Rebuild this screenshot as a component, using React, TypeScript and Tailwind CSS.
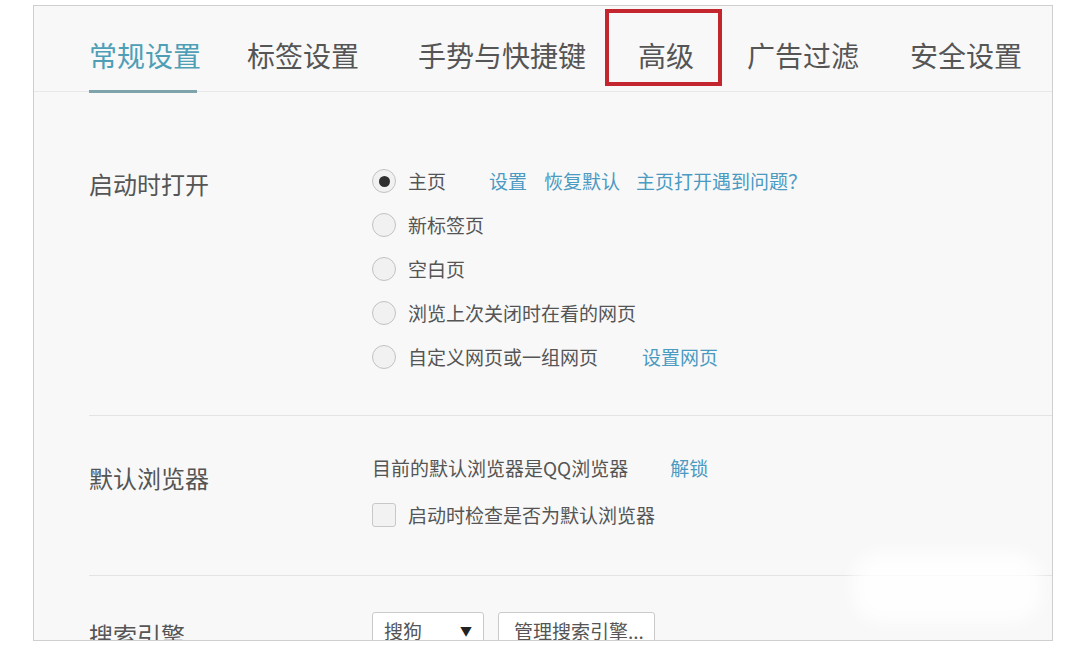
const tabs = [
  { label: "常规设置", ml: "ml-0", active: true },
  { label: "标签设置", ml: "ml-[46px]" },
  { label: "手势与快捷键", ml: "ml-[59px]" },
  { label: "高级", ml: "ml-[52px]", boxed: true },
  { label: "广告过滤", ml: "ml-[53px]" },
  { label: "安全设置", ml: "ml-[51px]" },
];

const Radio = ({ checked }: { checked?: boolean }) => (
  <span className="flex h-[24px] w-[24px] shrink-0 items-center justify-center rounded-full border-[1.5px] border-[#c2c2c2] bg-[#f1f1f1]">
    {checked && <span className="h-[11px] w-[11px] rounded-full bg-[#2e2e2e]" />}
  </span>
);

const Link = ({ children, className = "" }: { children: React.ReactNode; className?: string }) => (
  <span className={`text-[#4b9ac2] ${className}`}>{children}</span>
);

const App = () => {
  return (
    <div
      className="h-[647px] w-[1078px] bg-white pl-[33px] pt-[5px]"
      style={{ fontFamily: '"Noto Sans CJK SC", "Noto Sans", sans-serif' }}
    >
      <div className="relative h-[636px] w-[1020px] overflow-hidden border border-[#cfcfcf] bg-[#f8f8f8]">
        {/* tabs */}
        <div className="flex h-[86px] border-b border-[#e8e8e8] pl-[55px]">
          {tabs.map((t) => (
            <div
              key={t.label}
              className={`relative flex h-full items-center whitespace-nowrap pt-[12px] text-[28px] leading-none ${t.ml} ${
                t.active ? "text-[#4e9fb6]" : "text-[#555]"
              }`}
            >
              {t.label}
              {t.active && (
                <span className="absolute bottom-[-2px] left-0 h-[3px] w-[108px] bg-[#7fa3ab]" />
              )}
              {t.boxed && (
                <span className="absolute left-[-33px] right-[-28px] top-[3px] bottom-[5px] border-[4px] border-[#c3262e]" />
              )}
            </div>
          ))}
        </div>

        {/* 启动时打开 */}
        <div className="ml-[55px] flex border-b border-[#e3e3e3] pt-[67px] pb-[36px]">
          <div className="mt-[3px] flex h-[44px] w-[283px] items-center text-[24px] text-[#555]">启动时打开</div>
          <div className="flex flex-col whitespace-nowrap text-[19px] text-[#555]">
            <div className="flex h-[44px] items-center gap-[12px]">
              <Radio checked />
              <span>主页</span>
              <Link className="ml-[31px]">设置</Link>
              <Link className="ml-[5px]">恢复默认</Link>
              <Link className="ml-[4px]">主页打开遇到问题？</Link>
            </div>
            <div className="flex h-[44px] items-center gap-[12px]">
              <Radio />
              <span>新标签页</span>
            </div>
            <div className="flex h-[44px] items-center gap-[12px]">
              <Radio />
              <span>空白页</span>
            </div>
            <div className="flex h-[44px] items-center gap-[12px]">
              <Radio />
              <span>浏览上次关闭时在看的网页</span>
            </div>
            <div className="flex h-[44px] items-center gap-[12px]">
              <Radio />
              <span>自定义网页或一组网页</span>
              <Link className="ml-[32px]">设置网页</Link>
            </div>
          </div>
        </div>

        {/* 默认浏览器 */}
        <div className="ml-[55px] flex border-b border-[#e3e3e3] pt-[30px] pb-[38px]">
          <div className="w-[283px] pt-[17px] text-[24px] leading-[30px] text-[#555]">默认浏览器</div>
          <div className="flex flex-col gap-[3px] whitespace-nowrap text-[19px] text-[#555]">
            <div className="flex h-[44px] items-center">
              <span>目前的默认浏览器是QQ浏览器</span>
              <Link className="ml-[42px]">解锁</Link>
            </div>
            <div className="flex h-[44px] items-center gap-[12px]">
              <span className="h-[24px] w-[24px] rounded-[3px] border-[1.5px] border-[#c8c8c8] bg-[#f2f2f2]" />
              <span>启动时检查是否为默认浏览器</span>
            </div>
          </div>
        </div>

        {/* 搜索引擎 */}
        <div className="ml-[55px] flex pt-[36px]">
          <div className="w-[283px] pt-[8px] text-[24px] leading-[30px] text-[#555]">搜索引擎</div>
          <div className="flex gap-[14px] whitespace-nowrap text-[19px] text-[#555]">
            <div className="flex h-[38px] w-[112px] items-center justify-between rounded-[3px] border border-[#cacaca] bg-white px-[11px]">
              <span>搜狗</span>
              <span className="text-[12px] text-[#222]">▼</span>
            </div>
            <div className="flex h-[38px] w-[157px] items-center rounded-[3px] border border-[#cacaca] bg-white px-[15px]">
              管理搜索引擎...
            </div>
          </div>
        </div>

        <div className="absolute left-[818px] top-[545px] h-[72px] w-[190px] rounded-[30px] bg-white/80 blur-[8px]" />
      </div>
    </div>
  );
};

export default App;
